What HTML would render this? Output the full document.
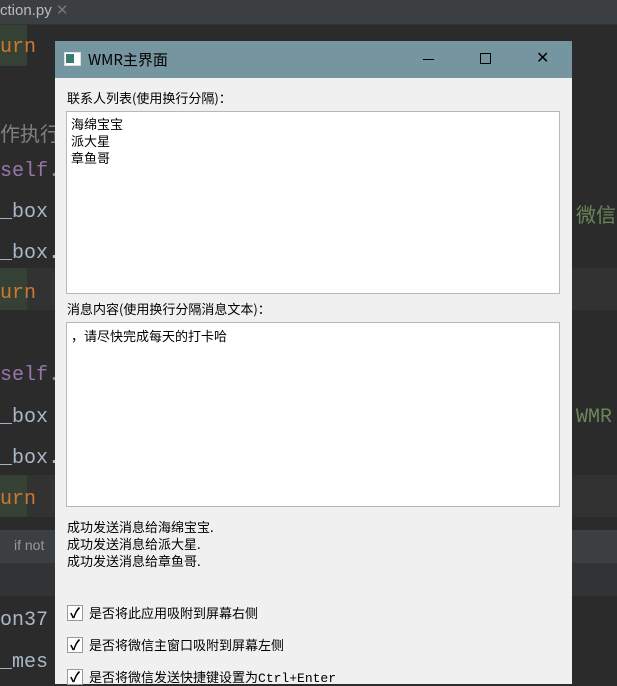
<!DOCTYPE html>
<html><head><meta charset="utf-8"><style>
body{margin:0;width:617px;height:684px;overflow:hidden;background:#2b2b2b;position:relative;font-family:"Liberation Sans","Noto Sans CJK SC",sans-serif}
.a{position:absolute;white-space:nowrap}
.code{font-family:"Liberation Mono","Noto Sans CJK SC",monospace;font-size:20px;color:#a9b7c6}
.cn{font-family:"Noto Sans CJK SC",sans-serif;font-size:13px;color:#000}
.cb{position:absolute;left:67px;width:14px;height:14px;border:1px solid #999;background:#fff;font-size:14px;line-height:14px;text-align:center;color:#000;font-weight:bold}
</style></head><body>
<div class="a" style="left:0;top:0;width:617px;height:24px;background:#3c3f41;border-bottom:1px solid #323232"></div>
<div class="a" style="left:0;top:1px;font-size:15px;color:#bbb">ction.py <span style="color:#777">✕</span></div>
<div class="a" style="left:0;top:25px;width:27px;height:41px;background:#344134"></div>
<div class="a code" style="left:0;top:36px;color:#cc7832">urn</div>
<div class="a code" style="left:0;top:118px;color:#808080">作执行</div>
<div class="a code" style="left:0;top:160px;color:#9876aa">self.</div>
<div class="a code" style="left:0;top:201px">_box =</div>
<div class="a code" style="left:576px;top:199px;color:#6a8759">微信</div>
<div class="a code" style="left:0;top:242px">_box.</div>
<div class="a" style="left:0;top:268px;width:617px;height:42px;background:#323232"></div>
<div class="a" style="left:0;top:268px;width:27px;height:42px;background:#344134"></div>
<div class="a code" style="left:0;top:282px;color:#cc7832">urn</div>
<div class="a code" style="left:0;top:364px;color:#9876aa">self.</div>
<div class="a code" style="left:0;top:406px">_box =</div>
<div class="a code" style="left:576px;top:406px;color:#6a8759">WMR</div>
<div class="a code" style="left:0;top:447px">_box.</div>
<div class="a" style="left:0;top:475px;width:617px;height:42px;background:#323232"></div>
<div class="a" style="left:0;top:475px;width:27px;height:42px;background:#344134"></div>
<div class="a code" style="left:0;top:488px;color:#cc7832">urn</div>
<div class="a" style="left:0;top:530px;width:617px;height:33px;background:#3c3f41"></div>
<div class="a" style="left:14px;top:537px;font-size:14px;color:#999">if not</div>
<div class="a" style="left:0;top:563px;width:617px;height:33px;background:#313335"></div>
<div class="a code" style="left:0;top:609px">on37</div>
<div class="a code" style="left:0;top:651px">_mes</div>

<div class="a" style="left:55px;top:41px;width:517px;height:643px;background:#f0f0f0"></div>
<div class="a" style="left:55px;top:41px;width:517px;height:37px;background:#7596a0"></div>
<div class="a" style="left:64px;top:52px;width:15px;height:12px;background:#fff;border:1px solid #ddd"></div>
<div class="a" style="left:66px;top:54px;width:8px;height:9px;background:#3a7a70"></div>
<div class="a" style="left:88px;top:49px;font-size:15px;color:#000;font-family:'Noto Sans CJK SC',sans-serif">WMR主界面</div>
<div class="a" style="left:423px;top:59px;width:11px;height:1px;background:#000"></div>
<div class="a" style="left:480px;top:53px;width:9px;height:9px;border:1px solid #000"></div>
<div class="a" style="left:536px;top:48px;font-size:16px;color:#000">✕</div>

<div class="a cn" style="left:67px;top:88px">联系人列表(使用换行分隔)：</div>
<div class="a" style="left:66px;top:111px;width:492px;height:181px;background:#fff;border:1px solid #b8b8b8"></div>
<div class="a cn" style="left:71px;top:115px;line-height:17px">海绵宝宝<br>派大星<br>章鱼哥</div>
<div class="a cn" style="left:67px;top:299px">消息内容(使用换行分隔消息文本)：</div>
<div class="a" style="left:66px;top:322px;width:492px;height:183px;background:#fff;border:1px solid #b8b8b8"></div>
<div class="a cn" style="left:71px;top:326px">，请尽快完成每天的打卡哈</div>
<div class="a cn" style="left:67px;top:518px;line-height:17px">成功发送消息给海绵宝宝.<br>成功发送消息给派大星.<br>成功发送消息给章鱼哥.</div>
<div class="cb" style="top:605px">✓</div><div class="a cn" style="left:89px;top:603px">是否将此应用吸附到屏幕右侧</div>
<div class="cb" style="top:637px">✓</div><div class="a cn" style="left:89px;top:635px">是否将微信主窗口吸附到屏幕左侧</div>
<div class="cb" style="top:669px">✓</div><div class="a cn" style="left:89px;top:667px">是否将微信发送快捷键设置为<span style="font-family:'Liberation Mono',monospace">Ctrl+Enter</span></div>
</body></html>
